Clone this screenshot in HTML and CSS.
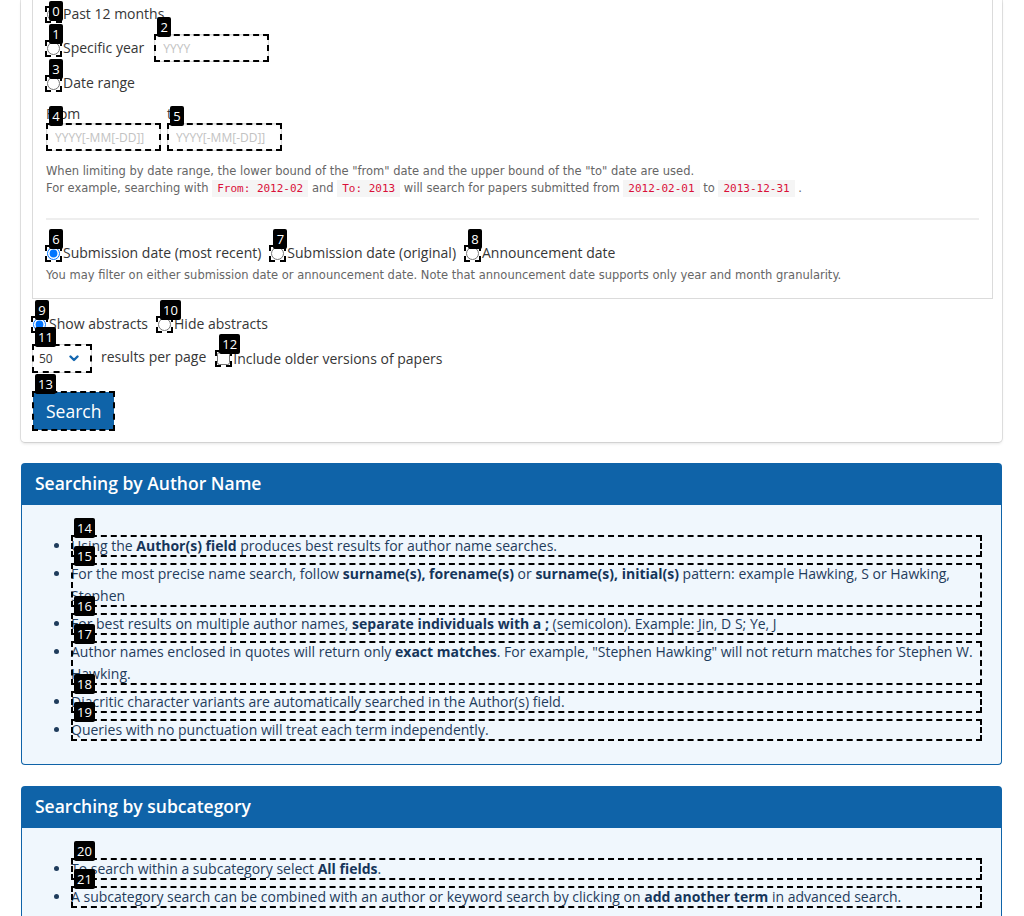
FILE: index.html
```html
<!DOCTYPE html>
<html lang="en">
<head>
<meta charset="utf-8">
<title>Advanced Search</title>
<link rel="stylesheet" href="styles.css">
</head>
<body>
<main class="page">
  <section class="box">
    <fieldset class="dates">
      <div class="opt first">
        <span class="mk rb"><input type="radio" name="date"><span class="badge clamp">0</span></span>
        <label>Past 12 months</label>
      </div>
      <div class="opt year-row">
        <span class="mk rb"><input type="radio" name="date"><span class="badge">1</span></span>
        <label>Specific year</label>
        <span class="mk inp year"><input type="text" placeholder="YYYY"><span class="badge">2</span></span>
      </div>
      <div class="opt range-row">
        <span class="mk rb"><input type="radio" name="date"><span class="badge">3</span></span>
        <label>Date range</label>
      </div>
      <div class="range">
        <div class="rcol">
          <label>From</label>
          <span class="mk inp"><input type="text" placeholder="YYYY[-MM[-DD]]"><span class="badge">4</span></span>
        </div>
        <div class="rcol">
          <label>to</label>
          <span class="mk inp"><input type="text" placeholder="YYYY[-MM[-DD]]"><span class="badge">5</span></span>
        </div>
      </div>
      <p class="help range-help">When limiting by date range, the lower bound of the "from" date and the upper bound of the "to" date are used.<br>For example, searching with <code>From: 2012-02</code> and <code>To: 2013</code> will search for papers submitted from <code>2012-02-01</code> to <code>2013-12-31</code> .</p>
      <hr class="sep">
      <div class="opt sub-row">
        <span class="mk rb"><input type="radio" name="dtype" checked><span class="badge">6</span></span>
        <label>Submission date (most recent)</label>
        <span class="mk rb next"><input type="radio" name="dtype"><span class="badge">7</span></span>
        <label>Submission date (original)</label>
        <span class="mk rb next"><input type="radio" name="dtype"><span class="badge">8</span></span>
        <label>Announcement date</label>
      </div>
      <p class="help sub-help">You may filter on either submission date or announcement date. Note that announcement date supports only year and month granularity.</p>
    </fieldset>

    <div class="opt abs-row">
      <span class="mk rb"><input type="radio" name="abs" checked><span class="badge">9</span></span>
      <label>Show abstracts</label>
      <span class="mk rb next"><input type="radio" name="abs"><span class="badge">10</span></span>
      <label>Hide abstracts</label>
    </div>

    <div class="opt size-row">
      <span class="mk selwrap">
        <select class="sel"><option>50</option></select>
        <svg class="chev" width="10" height="7" viewBox="0 0 10 7"><path d="M1.5 1.5 L5 5 L8.5 1.5" fill="none" stroke="#1467b0" stroke-width="2.4" stroke-linecap="round" stroke-linejoin="round"/></svg>
        <span class="badge">11</span>
      </span>
      <span class="rpp">results per page</span>
      <span class="mk rb cb"><input type="checkbox"><span class="badge">12</span></span>
      <label>Include older versions of papers</label>
    </div>

    <div class="btn-row">
      <span class="mk btnwrap"><button class="search-btn" type="button">Search</button><span class="badge">13</span></span>
    </div>
  </section>

  <section class="panel">
    <h2 class="panel-h">Searching by Author Name</h2>
    <div class="panel-b">
      <ul>
        <li class="mk">Using the <strong>Author(s) field</strong> produces best results for author name searches.<span class="badge">14</span></li>
        <li class="mk">For the most precise name search, follow <strong>surname(s), forename(s)</strong> or <strong>surname(s), initial(s)</strong> pattern: example Hawking, S or Hawking, Stephen<span class="badge">15</span></li>
        <li class="mk">For best results on multiple author names, <strong>separate individuals with a ;</strong> (semicolon). Example: Jin, D S; Ye, J<span class="badge">16</span></li>
        <li class="mk">Author names enclosed in quotes will return only <strong>exact matches</strong>. For example, "Stephen Hawking" will not return matches for Stephen W. Hawking.<span class="badge">17</span></li>
        <li class="mk">Diacritic character variants are automatically searched in the Author(s) field.<span class="badge">18</span></li>
        <li class="mk">Queries with no punctuation will treat each term independently.<span class="badge">19</span></li>
      </ul>
    </div>
  </section>

  <section class="panel">
    <h2 class="panel-h">Searching by subcategory</h2>
    <div class="panel-b">
      <ul>
        <li class="mk">To search within a subcategory select <strong>All fields</strong>.<span class="badge">20</span></li>
        <li class="mk">A subcategory search can be combined with an author or keyword search by clicking on <strong>add another term</strong> in advanced search.<span class="badge">21</span></li>
      </ul>
    </div>
  </section>
</main>
</body>
</html>
```
FILE: styles.css
```css
* { box-sizing: border-box; }

body {
  margin: 0;
  background: #fff;
  color: #363636;
  font-family: "Open Sans", "Liberation Sans", sans-serif;
  font-size: 14px;
}

.page {
  width: 981px;
  margin-left: 21px;
}

/* main form card */
.box {
  background: #fff;
  border-radius: 0 0 4px 4px;
  box-shadow: 0 2px 3px rgba(10, 10, 10, 0.1), 0 0 0 1px rgba(10, 10, 10, 0.1);
  padding: 0 9px 11px 11px;
}

.dates {
  margin: 0;
  border: 1px solid #dbdbdb;
  border-top: none;
  padding: 4px 13px 14px 13px;
  min-width: 0;
}

/* annotation marks */
.mk {
  position: relative;
  outline: 2px dashed #000;
  outline-offset: -2px;
}
span.mk { display: inline-flex; }

.badge {
  position: absolute;
  left: 3px;
  top: -17px;
  z-index: 5;
  height: 20px;
  min-width: 14px;
  padding: 0 3px;
  background: #000;
  color: #fff;
  font-family: "Open Sans", sans-serif;
  font-size: 13px;
  font-weight: 400;
  line-height: 20px;
  text-align: center;
  border-radius: 2px;
}

/* option rows */
.opt {
  display: flex;
  align-items: center;
  height: 20px;
  line-height: 20px;
  white-space: nowrap;
}
.opt label { cursor: default; }

.rb {
  outline-offset: 0;
  margin: 0 3px 0 1px;
}
.rb input {
  margin: 0;
  width: 13px;
  height: 13px;
}
.rb .badge { left: 2px; top: -18px; }
.rb .badge.clamp { top: -7px; }
.rb.next { margin-left: 10px; }
.rb.cb { margin-left: 11px; }

.year-row { margin-top: 10px; height: 28px; }
.range-row { margin-top: 11px; }

.inp input {
  width: 115px;
  height: 28px;
  margin: 0;
  border: 1px solid #dbdbdb;
  border-radius: 3px;
  box-shadow: inset 0 1px 2px rgba(10, 10, 10, 0.1);
  padding: 0 8px;
  font-family: "Open Sans", sans-serif;
  font-size: 12px;
  color: #363636;
  background: #fff;
}
.inp input::placeholder { color: #c2c2c2; }
.year { margin-left: 10px; }

.range {
  display: flex;
  gap: 6px;
  margin-top: 11px;
}
.rcol {
  display: flex;
  flex-direction: column;
}
.rcol label {
  line-height: 19px;
}

.help {
  margin: 0;
  font-family: "DejaVu Sans", "Verdana", sans-serif;
  font-size: 11.5px;
  line-height: 17px;
  color: #666;
}
.range-help { margin-top: 12px; }

code {
  font-family: "DejaVu Sans Mono", "Liberation Mono", monospace;
  font-size: 11px;
  color: #da1039;
  background: #f5f5f5;
  padding: 2px 5px;
}

.sep {
  border: none;
  height: 2px;
  background: #eee;
  margin: 21px 0 0;
}

.sub-row { margin-top: 23px; }
.sub-help { margin-top: 4px; }

.abs-row { margin-top: 15px; }

.size-row {
  margin-top: 10px;
  height: 29px;
}
.selwrap {
  width: 60px;
  height: 29px;
}
.sel {
  appearance: none;
  -webkit-appearance: none;
  width: 100%;
  height: 100%;
  margin: 0;
  border: 1px solid #dbdbdb;
  border-radius: 3px;
  background: #fff;
  padding: 0 0 0 6px;
  font-family: "Open Sans", sans-serif;
  font-size: 12px;
  color: #363636;
}
.chev {
  position: absolute;
  left: 37px;
  top: 11px;
  pointer-events: none;
}
.rpp {
  margin-left: 9px;
  position: relative;
  top: -2px;
}

.btn-row {
  margin-top: 18px;
  display: flex;
}
.btnwrap { padding: 1px; }
.search-btn {
  height: 38px;
  padding: 0 13px;
  border: none;
  border-radius: 3px;
  background: #0f63a8;
  color: #fff;
  font-family: "Open Sans", sans-serif;
  font-size: 17.5px;
  line-height: 38px;
}

/* help panels */
.panel {
  margin-top: 21px;
}
.panel-h {
  margin: 0;
  height: 42px;
  padding: 0 14px;
  background: #0f63a8;
  color: #fff;
  font-size: 17.5px;
  font-weight: 600;
  line-height: 40px;
  border-radius: 4px 4px 0 0;
}
.panel-b {
  background: #f0f7fd;
  border: 1px solid #0f63a8;
  border-top: none;
  border-radius: 0 0 4px 4px;
  padding: 30px 19px 23px 21px;
  color: #1f3c5c;
}
.panel-b ul {
  margin: 0;
  padding-left: 28px;
}
.panel-b li {
  line-height: 22px;
}
.panel-b li + li {
  margin-top: 6px;
}
.panel-b strong {
  font-weight: 700;
  color: #15355a;
}
```
